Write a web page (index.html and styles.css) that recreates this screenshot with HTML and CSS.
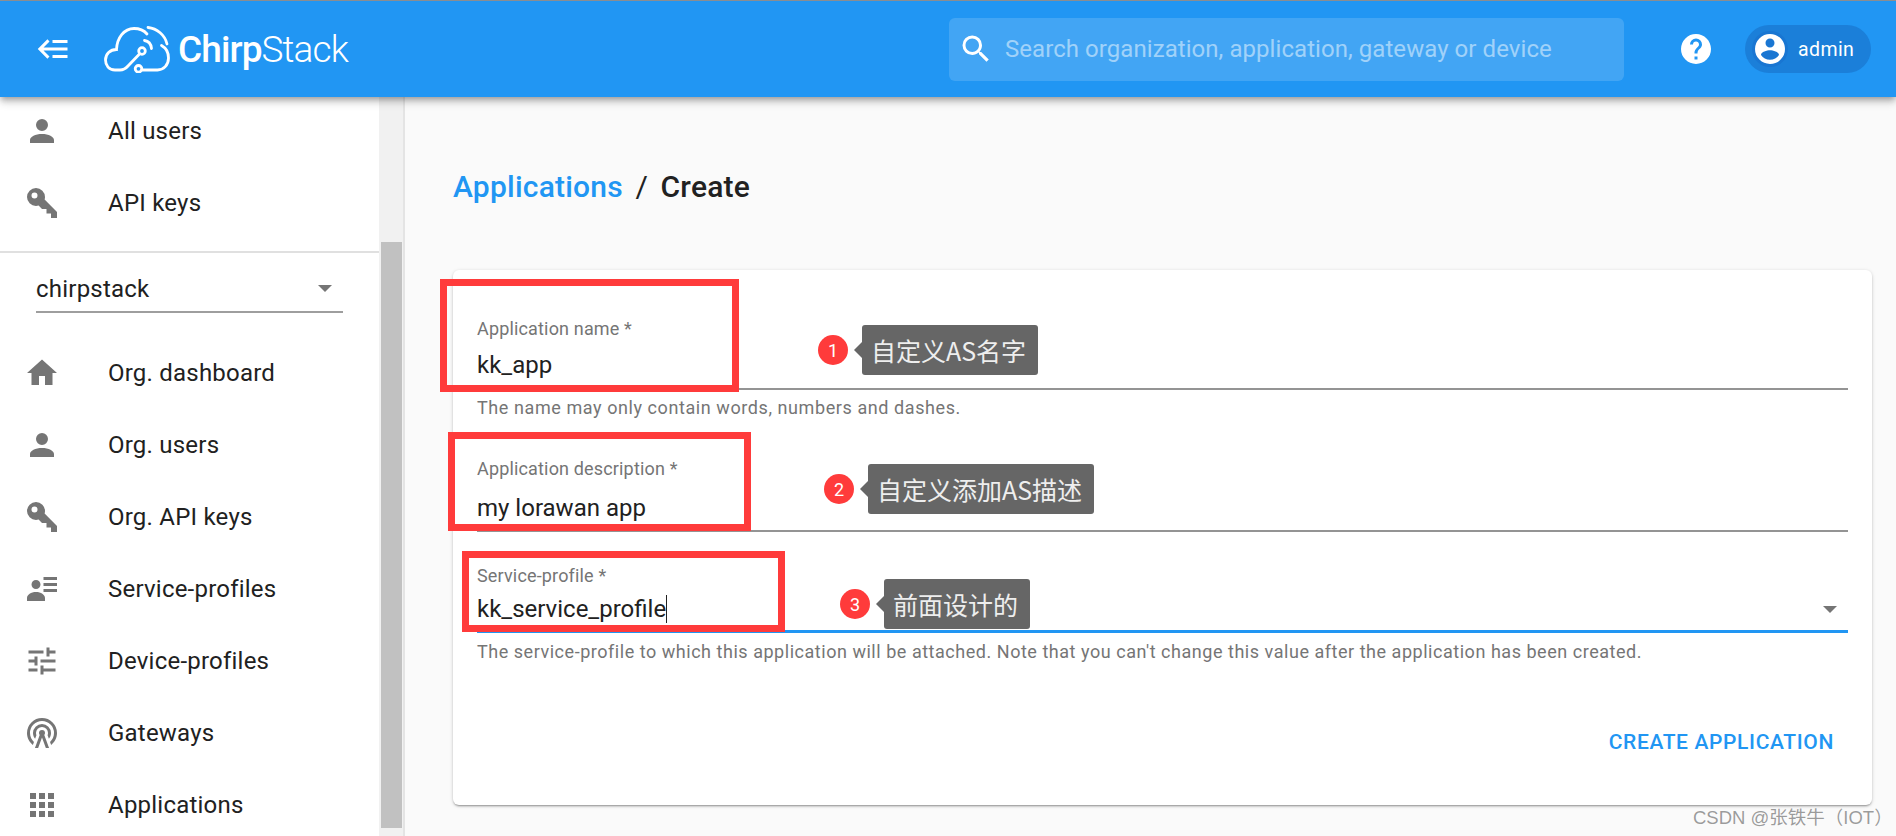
FILE: index.html
```html
<!DOCTYPE html>
<html lang="en">
<head>
<meta charset="utf-8">
<title>ChirpStack</title>
<link rel="stylesheet" href="styles.css">
</head>
<body>
<div class="page">
  <div class="strip"></div>
  <header class="topbar">
    <svg class="menu-icon" viewBox="0 0 24 24"><path d="M5,13L9,17L7.6,18.42L1.18,12L7.6,5.58L9,7L5,11H21V13H5M21,6V8H11V6H21M21,16V18H11V16H21Z"/></svg>
    <div class="logo">
      <svg class="logo-mark" viewBox="0 0 66 48" fill="none" stroke="#fff" stroke-width="2.800" stroke-linecap="round">
        <path d="M35.500 29L24 41C21.500 43.800 19 45 16 45H11C5 45 1.500 40.500 1.500 35C1.500 29 6 24.500 12.500 24.500C13 13 20 3.500 30 3.500C35.500 3.500 40 5.500 43 9"/>
        <path d="M57.500 20.500C62 23 64.500 28 64.500 33C64.500 40 59.500 45 53.500 45H38"/>
        <circle cx="38" cy="26" r="3.300"/>
        <circle cx="34.500" cy="43.800" r="3.300"/>
        <path d="M40.500 15.500C44.500 16 47 19 47.500 23.500"/>
        <path d="M44 2.500C53 3.500 61 10 63 19"/>
      </svg>
      <span class="logo-text"><b class="logo-bold">Chirp</b>Stack</span>
    </div>
    <div class="search">
      <svg class="search-icon" viewBox="0 0 24 24"><path d="M9.5,3A6.5,6.5 0 0,1 16,9.5C16,11.11 15.41,12.59 14.41,13.730L14.71,14H15.5L20.5,19L19,20.5L14,15.5V14.71L13.73,14.41C12.59,15.41 11.11,16 9.5,16A6.5,6.5 0 0,1 3,9.5A6.5,6.5 0 0,1 9.5,3M9.5,5C7,5 5,7 5,9.5C5,12 7,14 9.5,14C12,14 14,12 14,9.5C14,7 12,5 9.5,5Z"/></svg>
      <span class="search-text">Search organization, application, gateway or device</span>
    </div>
    <svg class="help-icon" viewBox="0 0 24 24"><path d="M15.07,11.25L14.17,12.17C13.45,12.89 13,13.5 13,15H11V14.5C11,13.39 11.45,12.39 12.17,11.67L13.41,10.41C13.78,10.05 14,9.55 14,9C14,7.89 13.1,7 12,7A2,2 0 0,0 10,9H8A4,4 0 0,1 12,5A4,4 0 0,1 16,9C16,9.88 15.64,10.67 15.07,11.25M13,19H11V17H13M12,2A10,10 0 0,0 2,12A10,10 0 0,0 12,22A10,10 0 0,0 22,12C22,6.47 17.5,2 12,2Z"/></svg>
    <div class="chip">
      <span class="avatar"><svg viewBox="0 0 24 24"><path d="M12,19.2C9.5,19.2 7.29,17.92 6,16C6.03,14 10,12.9 12,12.9C14,12.9 17.97,14 18,16C16.71,17.92 14.5,19.2 12,19.2M12,5A3,3 0 0,1 15,8A3,3 0 0,1 12,11A3,3 0 0,1 9,8A3,3 0 0,1 12,5M12,2A10,10 0 0,0 2,12A10,10 0 0,0 12,22A10,10 0 0,0 22,12C22,6.47 17.5,2 12,2Z"/></svg></span>
      <span class="chip-label">admin</span>
    </div>
  </header>
  <div class="body">
    <aside class="sidebar">
      <nav class="nav nav-top">
        <a class="nav-item"><svg class="nav-icon" viewBox="0 0 24 24"><path d="M12,4A4,4 0 0,1 16,8A4,4 0 0,1 12,12A4,4 0 0,1 8,8A4,4 0 0,1 12,4M12,14C16.42,14 20,15.79 20,18V20H4V18C4,15.79 7.58,14 12,14Z"/></svg><span>All users</span></a>
        <a class="nav-item"><svg class="nav-icon" viewBox="0 0 24 24"><path d="M22,18V22H18V19H15V16H12L9.74,13.74C9.19,13.91 8.61,14 8,14A6,6 0 0,1 2,8A6,6 0 0,1 8,2A6,6 0 0,1 14,8C14,8.61 13.91,9.19 13.74,9.74L22,18M7,5A2,2 0 0,0 5,7A2,2 0 0,0 7,9A2,2 0 0,0 9,7A2,2 0 0,0 7,5Z"/></svg><span>API keys</span></a>
      </nav>
      <div class="org-select">
        <span>chirpstack</span>
        <i class="arrow"></i>
      </div>
      <nav class="nav">
        <a class="nav-item"><svg class="nav-icon" viewBox="0 0 24 24"><path d="M10,20V14H14V20H19V12H22L12,3L2,12H5V20H10Z"/></svg><span>Org. dashboard</span></a>
        <a class="nav-item"><svg class="nav-icon" viewBox="0 0 24 24"><path d="M12,4A4,4 0 0,1 16,8A4,4 0 0,1 12,12A4,4 0 0,1 8,8A4,4 0 0,1 12,4M12,14C16.42,14 20,15.79 20,18V20H4V18C4,15.79 7.58,14 12,14Z"/></svg><span>Org. users</span></a>
        <a class="nav-item"><svg class="nav-icon" viewBox="0 0 24 24"><path d="M22,18V22H18V19H15V16H12L9.74,13.74C9.19,13.91 8.61,14 8,14A6,6 0 0,1 2,8A6,6 0 0,1 8,2A6,6 0 0,1 14,8C14,8.61 13.91,9.19 13.74,9.74L22,18M7,5A2,2 0 0,0 5,7A2,2 0 0,0 7,9A2,2 0 0,0 9,7A2,2 0 0,0 7,5Z"/></svg><span>Org. API keys</span></a>
        <a class="nav-item"><svg class="nav-icon" viewBox="0 0 24 24"><path d="M11,9C11,10.66 9.66,12 8,12C6.34,12 5,10.66 5,9C5,7.34 6.34,6 8,6C9.66,6 11,7.34 11,9M14,20H2V18C2,15.79 4.69,14 8,14C11.31,14 14,15.79 14,18M22,12V14H13V12M22,8V10H13V8M22,4V6H13V4Z"/></svg><span>Service-profiles</span></a>
        <a class="nav-item"><svg class="nav-icon" viewBox="0 0 24 24"><path d="M3,17V19H9V17H3M3,5V7H13V5H3M13,21V19H21V17H13V15H11V21H13M7,9V11H3V13H7V15H9V9H7M21,13V11H11V13H21M15,9H17V7H21V5H17V3H15V9Z"/></svg><span>Device-profiles</span></a>
        <a class="nav-item"><svg class="nav-icon" viewBox="0 0 24 24"><path d="M12,10A2,2 0 0,1 14,12C14,12.5 13.82,12.94 13.53,13.29L16.7,22H14.57L12,14.93L9.43,22H7.3L10.47,13.29C10.18,12.94 10,12.5 10,12A2,2 0 0,1 12,10M12,8A4,4 0 0,0 8,12C8,12.5 8.1,13 8.28,13.46L7.4,15.86C6.53,14.81 6,13.47 6,12A6,6 0 0,1 12,6A6,6 0 0,1 18,12C18,13.47 17.47,14.81 16.6,15.86L15.72,13.46C15.9,13 16,12.5 16,12A4,4 0 0,0 12,8M12,4A8,8 0 0,0 4,12C4,14.36 5,16.5 6.64,17.94L5.92,19.94C3.54,18.11 2,15.23 2,12A10,10 0 0,1 12,2A10,10 0 0,1 22,12C22,15.23 20.46,18.11 18.08,19.94L17.36,17.94C19,16.5 20,14.36 20,12A8,8 0 0,0 12,4Z"/></svg><span>Gateways</span></a>
        <a class="nav-item"><svg class="nav-icon" viewBox="0 0 24 24"><path d="M16,20H20V16H16M16,14H20V10H16M10,8H14V4H10M16,8H20V4H16M10,14H14V10H10M4,14H8V10H4M4,20H8V16H4M10,20H14V16H10M4,8H8V4H4V8Z"/></svg><span>Applications</span></a>
      </nav>
    </aside>
    <div class="scrollbar"><div class="thumb"></div></div>
    <main class="main">
      <h1 class="crumbs"><a class="crumb-link">Applications</a><span class="crumb-sep">/</span><span>Create</span></h1>
      <section class="card">
        <div class="field field-name">
          <label class="label">Application name *</label>
          <div class="value">kk_app</div>
          <div class="underline"></div>
          <p class="helper helper-short">The name may only contain words, numbers and dashes.</p>
        </div>
        <div class="field field-desc">
          <label class="label">Application description *</label>
          <div class="value">my lorawan app</div>
          <div class="underline"></div>
        </div>
        <div class="field field-profile">
          <label class="label">Service-profile *</label>
          <div class="value value-select"><span class="caret-text">kk_service_profile</span><i class="arrow"></i></div>
          <div class="underline underline-focus"></div>
          <p class="helper">The service-profile to which this application will be attached. Note that you can't change this value after the application has been created.</p>
        </div>
        <div class="actions"><button class="btn">Create application</button></div>
      </section>
    </main>
  </div>

  <div class="redbox redbox-1"></div>
  <div class="redbox redbox-2"></div>
  <div class="redbox redbox-3"></div>

  <div class="note note-1"><span class="num">1</span><span class="tag">自定义AS名字</span></div>
  <div class="note note-2"><span class="num">2</span><span class="tag">自定义添加AS描述</span></div>
  <div class="note note-3"><span class="num">3</span><span class="tag">前面设计的</span></div>

  <div class="watermark">CSDN @张铁牛（IOT）</div>
</div>
</body>
</html>
```
FILE: styles.css
```css
* { box-sizing: border-box; }
html, body { margin: 0; padding: 0; height: 100%; overflow: hidden; }
body { font-family: Roboto, "Noto Sans CJK SC", sans-serif; color: #212121; background: #fafafa; }

.page { position: relative; width: 1896px; height: 836px; display: flex; flex-direction: column; overflow: hidden; }
.strip { height: 1px; flex: none; background: #8f9296; }

/* top bar */
.topbar { flex: none; height: 96px; background: #2196f3; display: flex; align-items: center; position: relative; z-index: 5; box-shadow: 0 3px 6px -1px rgba(0,0,0,.3), 0 6px 8px 0 rgba(0,0,0,.14); padding-left: 36px; }
.menu-icon { width: 36px; height: 36px; fill: #fff; flex: none; }
.logo { display: flex; align-items: center; margin-left: 32px; width: 245px; flex: none; }
.logo-mark { width: 66px; height: 48px; flex: none; }
.logo-text { font-size: 37px; font-weight: 300; color: #fff; margin-left: 8px; letter-spacing: -0.9px; line-height: 1; }
.logo-bold { font-weight: 500; }
.search { margin-left: 600px; width: 675px; height: 63px; flex: none; background: rgba(255,255,255,.15); border-radius: 6px; display: flex; align-items: center; padding-left: 9px; }
.search-icon { width: 36px; height: 36px; fill: #fff; flex: none; }
.search-text { font-size: 24px; color: rgba(255,255,255,.5); margin-left: 11px; white-space: nowrap; letter-spacing: .06px; }
.help-icon { width: 36px; height: 36px; fill: #fff; flex: none; margin-left: 54px; }
.chip { margin-left: 31px; width: 126px; height: 48px; flex: none; background: #1b7fd9; border-radius: 24px; display: flex; align-items: center; padding-left: 7px; }
.avatar { width: 36px; height: 36px; border-radius: 50%; background: #1976d2; display: flex; align-items: center; justify-content: center; flex: none; }
.avatar svg { width: 36px; height: 36px; fill: #fff; }
.chip-label { color: #fff; font-size: 19.5px; margin-left: 10px; letter-spacing: .4px; }

/* layout */
.body { flex: 1; display: flex; min-height: 0; }
.sidebar { width: 379px; flex: none; background: #fff; overflow: hidden; }
.scrollbar { width: 26px; flex: none; background: #f1f1f1; border-right: 2px solid #e4e4e4; padding: 145px 3px 8px 2px; }
.thumb { width: 21px; height: 100%; background: #c1c1c1; }
.main { flex: 1; min-width: 0; padding: 0 24px 0 48px; }

/* sidebar */
.nav { display: flex; flex-direction: column; }
.nav-top { margin-top: -2px; padding-bottom: 12px; border-bottom: 2px solid #e0e0e0; }
.nav-item { height: 72px; flex: none; display: flex; align-items: center; padding-left: 24px; font-size: 24px; letter-spacing: .22px; color: #212121; }
.nav-icon { width: 36px; height: 36px; fill: #757575; flex: none; margin-right: 48px; }
.org-select { margin: 15px 36px 24px 36px; height: 45px; padding-bottom: 2px; border-bottom: 2px solid #9e9e9e; font-size: 24px; letter-spacing: .22px; display: flex; align-items: center; justify-content: space-between; padding-right: 11px; }
.arrow { display: block; width: 0; height: 0; border-left: 7.500px solid transparent; border-right: 7.500px solid transparent; border-top: 7.500px solid #757575; flex: none; }

/* content */
.crumbs { margin: 0; height: 173px; padding-top: 72px; font-size: 30px; font-weight: 500; line-height: 36px; letter-spacing: .22px; color: #212121; display: flex; }
.crumb-link { color: #2196f3; }
.crumb-sep { margin: 0 12.500px; font-weight: 400; }
.card { height: 535px; background: #fff; border-radius: 6px; box-shadow: 0 2px 2px -1px rgba(0,0,0,.3), 0 1px 3px 0 rgba(0,0,0,.14), 0 1px 5px 0 rgba(0,0,0,.08); padding: 48px 24px 0; }
.field { display: flex; flex-direction: column; }
.label { font-size: 18px; line-height: 22px; color: #757575; letter-spacing: .16px; }
.value { font-size: 24px; line-height: 30px; color: #212121; display: flex; align-items: center; justify-content: space-between; }
.value-select { padding-right: 11px; }
.caret-text { border-right: 1.500px solid #212121; line-height: 28px; }
.underline { height: 2px; background: #949494; }
.underline-focus { height: 3px; background: #2196f3; }
.helper { margin: 6px 0 0; font-size: 18px; line-height: 24px; color: #757575; letter-spacing: .53px; }
.helper-short { letter-spacing: .58px; }
.field-name .value { margin-top: 10px; margin-bottom: 8px; }
.field-desc { margin-top: 38px; }
.field-desc .value { margin-top: 13px; margin-bottom: 7px; }
.field-profile { margin-top: 33px; }
.field-profile .value { margin-top: 8px; margin-bottom: 7px; }
.field-profile .helper { margin-top: 7px; }
.actions { display: flex; justify-content: flex-end; margin-top: 60px; padding-right: 14px; }
.btn { border: 0; background: none; padding: 0; font-family: inherit; font-size: 21px; font-weight: 500; line-height: 36px; color: #2196f3; text-transform: uppercase; letter-spacing: .64px; }

/* annotations over the screenshot */
.redbox { position: absolute; border: 7px solid #ff3b3b; z-index: 6; }
.redbox-1 { left: 440px; top: 279px; width: 299px; height: 113px; }
.redbox-2 { left: 448px; top: 432px; width: 303px; height: 99px; }
.redbox-3 { left: 462px; top: 551px; width: 323px; height: 81px; }
.note { position: absolute; display: flex; align-items: center; z-index: 6; font-family: "Noto Sans CJK SC", sans-serif; }
.note-1 { left: 818px; top: 325px; }
.note-2 { left: 824px; top: 464px; }
.note-3 { left: 840px; top: 579px; }
.num { width: 30px; height: 30px; border-radius: 50%; background: #ff3b3b; color: #fff; font-size: 18px; display: flex; align-items: center; justify-content: center; margin-right: 14px; font-family: Roboto, sans-serif; }
.tag { position: relative; height: 50px; padding: 0 12px 0 9px; background: #666; color: #eee; font-size: 25px; line-height: 50px; border-radius: 3px; white-space: nowrap; }
.tag::before { content: ""; position: absolute; left: -8px; top: 17px; border-top: 8px solid transparent; border-bottom: 8px solid transparent; border-right: 8px solid #666; }
.watermark { position: absolute; left: 1693px; top: 804px; font-size: 18.500px; line-height: 28px; color: rgba(90,90,90,.6); z-index: 6; white-space: nowrap; font-family: "Liberation Sans", "Noto Sans CJK SC", sans-serif; }
```
